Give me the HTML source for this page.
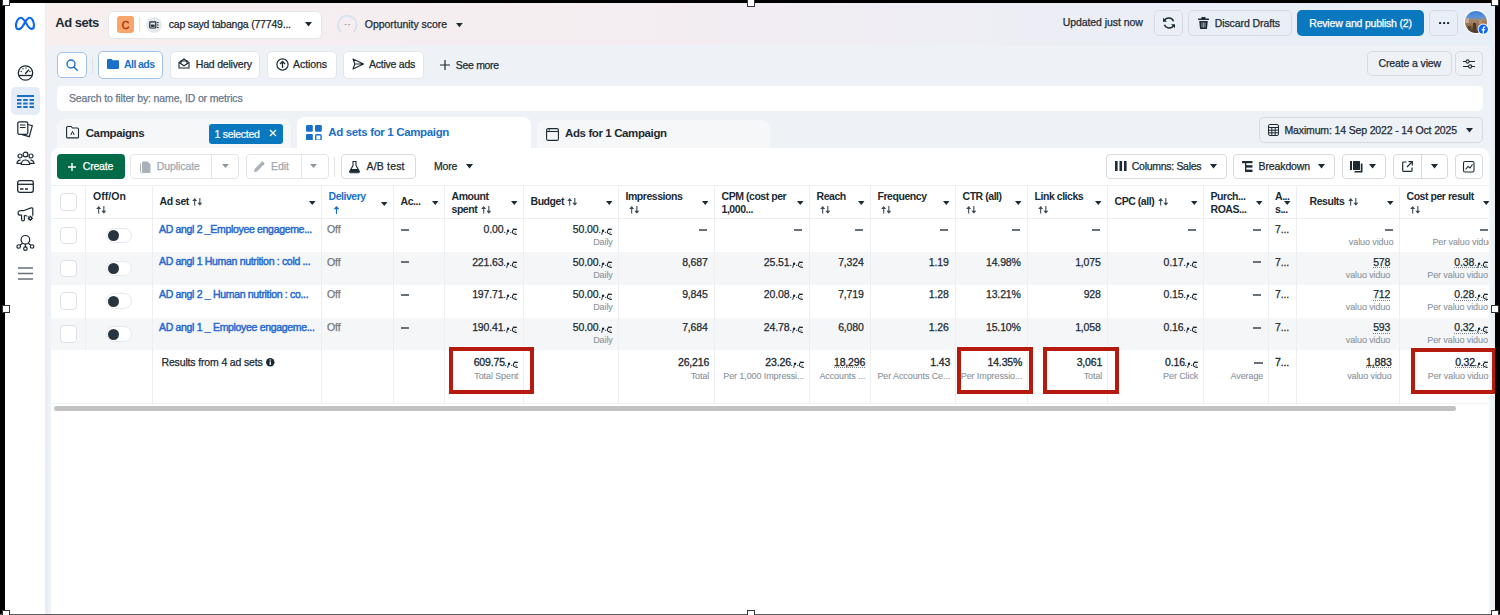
<!DOCTYPE html>
<html><head><meta charset="utf-8">
<style>
*{box-sizing:border-box;margin:0;padding:0}
html,body{width:1500px;height:615px;overflow:hidden;background:#fff}
body{position:relative;font-family:"Liberation Sans",sans-serif;font-size:10.5px;color:#1c2b33}
.a{position:absolute}
.t{position:absolute;white-space:nowrap;line-height:1;-webkit-text-stroke:0.25px currentColor}
svg{position:absolute;overflow:visible}
</style></head><body>
<div class="a" style="left:46px;top:3px;width:1449px;height:612px;background:#e6edf6"></div>
<div class="a" style="left:46px;top:3px;width:14px;height:612px;background:linear-gradient(180deg,#f4eef1 0px,#eceff5 250px,#e5ecf5 615px)"></div>
<div class="a" style="left:46px;top:3px;width:1449px;height:47px;background:linear-gradient(90deg,#f7eeee 0%,#f4edf1 40%,#ebeef6 75%,#e8eef7 100%)"></div>
<div class="a" style="left:48px;top:44.5px;width:1443.5px;height:570.5px;background:#eef1f5;border-radius:7px 7px 0 0"></div>
<div class="a" style="left:5px;top:3px;width:41px;height:612px;background:#fff;border-right:1px solid #ebedf1"></div>
<svg style="left:15px;top:15.7px" width="22" height="15" viewBox="0 0 22 15"><path d="M3.2 13.2C1.5 13.2 1 11.3 1 9.6 1 5.6 3.1 1.8 5.8 1.8c2 0 3.4 2.2 5.2 5.2 1.7 2.9 3.1 5.9 5.3 5.9 1.7 0 2.7-1.4 2.7-3.5 0-3.9-1.9-7.6-4.3-7.6-2.1 0-3.5 2.6-5.1 5.2C7.9 10.6 5.9 13.2 3.2 13.2z" fill="none" stroke="#0a66f5" stroke-width="2.1" stroke-linejoin="round"/></svg>
<div class="a" style="left:11px;top:87px;width:29px;height:28px;background:#e3ecf7;border-radius:5px"></div>
<svg style="left:17px;top:65px" width="17" height="16" viewBox="0 0 17 16"><circle cx="8.5" cy="8" r="7.2" fill="none" stroke="#1c2b33" stroke-width="1.3"/><path d="M1.8 10.5h13.4" stroke="#1c2b33" stroke-width="1.3"/><path d="M8.5 8.5l3-3.5" stroke="#1c2b33" stroke-width="1.3" stroke-linecap="round"/><circle cx="4.2" cy="6.5" r=".7" fill="#1c2b33"/><circle cx="6" cy="3.8" r=".7" fill="#1c2b33"/><circle cx="9" cy="3" r=".7" fill="#1c2b33"/><circle cx="12.8" cy="6.5" r=".7" fill="#1c2b33"/></svg>
<svg style="left:17px;top:95px" width="17" height="13" viewBox="0 0 17 13"><g fill="#1a6fc9"><rect x="0" y="0" width="17" height="2"/><rect x="0" y="4" width="4.5" height="2"/><rect x="6.2" y="4" width="4.5" height="2"/><rect x="12.5" y="4" width="4.5" height="2"/><rect x="0" y="7.5" width="4.5" height="2"/><rect x="6.2" y="7.5" width="4.5" height="2"/><rect x="12.5" y="7.5" width="4.5" height="2"/><rect x="0" y="11" width="4.5" height="2"/><rect x="6.2" y="11" width="4.5" height="2"/><rect x="12.5" y="11" width="4.5" height="2"/></g></svg>
<svg style="left:17px;top:121px" width="17" height="16" viewBox="0 0 17 16"><g fill="none" stroke="#1c2b33" stroke-width="1.2"><rect x="0.8" y="0.8" width="10" height="12.5" rx="1.5"/><path d="M10.8 3.5l4.5 1.2-3 11-7.2-2"/><path d="M3 4h5.5M3 6.5h5.5"/></g></svg>
<svg style="left:16px;top:151px" width="19" height="15" viewBox="0 0 19 15"><g fill="none" stroke="#1c2b33" stroke-width="1.2"><circle cx="9.5" cy="3.5" r="2.4"/><circle cx="4" cy="5" r="2"/><circle cx="15" cy="5" r="2"/><path d="M5.3 13.5c0-2.6 1.9-4.5 4.2-4.5s4.2 1.9 4.2 4.5z"/><path d="M4.6 9.2C2.5 9 1 10.3 1 12.3h4"/><path d="M14.4 9.2c2.1-.2 3.6 1.1 3.6 3.1h-4"/></g></svg>
<svg style="left:17px;top:180px" width="17" height="13" viewBox="0 0 17 13"><g fill="none" stroke="#1c2b33" stroke-width="1.3"><rect x="0.7" y="0.7" width="15.6" height="11.6" rx="2"/><path d="M0.7 4.3h15.6"/><path d="M3 9h3.5M8 9h3"/></g></svg>
<svg style="left:18px;top:207px" width="16" height="15" viewBox="0 0 16 15"><g fill="none" stroke="#1c2b33" stroke-width="1.2" stroke-linejoin="round"><path d="M2.3 3.7H5.2L13.2 0.9Q14.8 0.5 14.8 2V8.8"/><path d="M2.3 3.7A2.25 2.25 0 0 0 2.3 8.2H4"/><path d="M3.6 8.2V12.6A1.4 1.4 0 0 0 6.4 12.6V8.2"/><path d="M6.4 8.2L9.5 9.2"/></g><circle cx="12.3" cy="11.3" r="2.1" fill="#1c2b33"/><circle cx="12.3" cy="11.3" r="0.8" fill="#fff"/><g stroke="#1c2b33" stroke-width="1"><path d="M12.3 8.6v5.4M9.6 11.3h5.4M10.4 9.4l3.8 3.8M14.2 9.4l-3.8 3.8"/></g><circle cx="12.3" cy="11.3" r="0.7" fill="#fff"/></svg>
<svg style="left:16px;top:233px" width="19" height="19" viewBox="0 0 19 19"><g fill="none" stroke="#1c2b33" stroke-width="1.2"><circle cx="9.4" cy="6.8" r="4.3"/><path d="M9.4 11.1v3.3M6.6 10.2L3.9 12.3M12.2 10.2l2.7 2.1"/><circle cx="2.7" cy="13.5" r="1.75"/><circle cx="9.4" cy="15.7" r="1.75"/><circle cx="16.1" cy="13.5" r="1.75"/></g></svg>
<svg style="left:18px;top:267px" width="15" height="13" viewBox="0 0 15 13"><g stroke="#67707a" stroke-width="1.4"><path d="M0 1h15M0 6.5h15M0 12h15"/></g></svg>
<div class="t" style="left:55.30px;top:16.30px;font-size:13px;font-weight:bold;-webkit-text-stroke:0;color:#1c2b33;letter-spacing:-0.509px;">Ad sets</div>
<div class="a" style="left:108px;top:10.5px;width:214px;height:28.0px;background:#fff;border:1px solid #e3e6ea;border-radius:5px"></div>
<div class="a" style="left:117px;top:16px;width:17px;height:17px;background:#f8a66a;border-radius:3px"></div>
<div class="t" style="left:121.81px;top:19.51px;font-size:10.5px;color:#b0381d;letter-spacing:0.000px;-webkit-text-stroke:0.5px currentColor;">C</div>
<div class="a" style="left:139px;top:17px;width:1px;height:16px;background:#e3e6ea"></div>
<svg style="left:146px;top:16.5px" width="16" height="16" viewBox="0 0 16 16"><circle cx="8" cy="8" r="8" fill="#e6e9ed"/><rect x="3.8" y="4.8" width="6" height="6.2" rx="0.8" fill="none" stroke="#1c2b33" stroke-width="1.2"/><rect x="5" y="7.6" width="3.6" height="2.2" fill="#1c2b33"/><path d="M11 5.5h1.6M11 8h1.6M11 10.5h1.6" stroke="#1c2b33" stroke-width="1.1"/></svg>
<div class="t" style="left:168.80px;top:19.11px;font-size:10.5px;color:#1c2b33;letter-spacing:-0.202px;">cap sayd tabanga (77749...</div>
<svg style="left:304.5px;top:22.25px" width="7" height="4.5" viewBox="0 0 7 4.5"><path d="M0 0H7L3.5 4.5Z" fill="#1c2b33"/></svg>
<svg style="left:337px;top:15px" width="21" height="19" viewBox="0 0 21 19"><path d="M4 16.9A9.3 9.3 0 1 1 16.6 16.9" fill="none" stroke="#d8e4ef" stroke-width="1.9"/><path d="M7.6 9.6h2.2M11 9.6h2.2" stroke="#9aa3ab" stroke-width="0.9"/></svg>
<div class="t" style="left:364.80px;top:19.11px;font-size:10.5px;color:#1c2b33;letter-spacing:-0.040px;">Opportunity score</div>
<svg style="left:455.90000000000003px;top:22.7px" width="6.8" height="4.2" viewBox="0 0 6.8 4.2"><path d="M0 0H6.8L3.4 4.2Z" fill="#1c2b33"/></svg>
<div class="t" style="left:1062.70px;top:17.41px;font-size:10.5px;color:#1c2b33;letter-spacing:-0.071px;">Updated just now</div>
<div class="a" style="left:1154px;top:10px;width:29px;height:26px;border:1px solid #d7dbe0;border-radius:5px"></div>
<svg style="left:1161.5px;top:16px" width="14" height="14" viewBox="0 0 14 14"><g fill="none" stroke="#1c2b33" stroke-width="1.5"><path d="M11.6 5.2A5.2 5.2 0 0 0 2.3 4.6"/><path d="M2.4 8.8A5.2 5.2 0 0 0 11.7 9.4"/></g><path d="M1 1.8v4h4z" fill="#1c2b33"/><path d="M13 12.2v-4H9z" fill="#1c2b33"/></svg>
<div class="a" style="left:1188px;top:10px;width:104px;height:26px;border:1px solid #d7dbe0;border-radius:5px"></div>
<svg style="left:1197.5px;top:17px" width="11" height="12" viewBox="0 0 11 12"><g fill="#1c2b33"><rect x="0" y="1.5" width="11" height="1.6" rx=".5"/><rect x="3.5" y="0" width="4" height="2" rx=".6"/><path d="M1.2 4h8.6l-.8 7.4c-.1.5-.4.6-.8.6H2.8c-.4 0-.7-.1-.8-.6z"/></g><path d="M4 5.5v5M5.5 5.5v5M7 5.5v5" stroke="#e9eef6" stroke-width=".6"/></svg>
<div class="t" style="left:1214.70px;top:18.31px;font-size:10.5px;color:#1c2b33;letter-spacing:-0.087px;">Discard Drafts</div>
<div class="a" style="left:1297px;top:10px;width:126.5px;height:26px;background:#0a78be;border-radius:5px"></div>
<div class="t" style="left:1309.30px;top:18.31px;font-size:10.5px;color:#ffffff;letter-spacing:-0.200px;">Review and publish (2)</div>
<div class="a" style="left:1429px;top:10px;width:28.5px;height:26px;border:1px solid #d7dbe0;border-radius:5px"></div>
<svg style="left:1438.5px;top:21.8px" width="10" height="3" viewBox="0 0 10 3"><g fill="#1c2b33"><rect x="0" y="0" width="2.1" height="2.1" rx=".4"/><rect x="4" y="0" width="2.1" height="2.1" rx=".4"/><rect x="8" y="0" width="2.1" height="2.1" rx=".4"/></g></svg>
<svg style="left:1464px;top:10px" width="24" height="24" viewBox="0 0 24 24"><defs><linearGradient id="av" x1="0" y1="0" x2="0" y2="1"><stop offset="0" stop-color="#3e7fdc"/><stop offset="0.3" stop-color="#5f93d8"/><stop offset="0.4" stop-color="#a48a6a"/><stop offset="0.7" stop-color="#8a6a48"/><stop offset="1" stop-color="#3e2e20"/></linearGradient><clipPath id="avc"><circle cx="12" cy="12" r="11"/></clipPath></defs><circle cx="12" cy="12" r="12" fill="#fff"/><circle cx="12" cy="12" r="11" fill="url(#av)"/><g clip-path="url(#avc)"><rect x="1" y="8" width="4" height="5" fill="#c9a58a"/><rect x="9" y="13" width="3" height="7" fill="#4a3a2c"/><rect x="15" y="10" width="3" height="4" fill="#b89070"/><rect x="19" y="12" width="3" height="3" fill="#c86a40"/><rect x="4" y="16" width="3" height="5" fill="#5a4532"/></g><circle cx="19.2" cy="19.2" r="5.6" fill="#fff"/><circle cx="19.2" cy="19.2" r="4.7" fill="#0866ff"/><path d="M20 23.9v-3.4h1.1l.2-1.3H20v-.8c0-.4.1-.6.6-.6h.7v-1.2c-.3 0-.7-.1-1-.1-1 0-1.6.6-1.6 1.7v1h-1.1v1.3h1.1v3.4z" fill="#fff"/></svg>
<div class="a" style="left:57px;top:51.8px;width:29.5px;height:26.700000000000003px;background:#fff;border:1.5px solid #9fc3e6;border-radius:5px"></div>
<svg style="left:66px;top:59px" width="12" height="12" viewBox="0 0 12 12"><circle cx="5" cy="5" r="4" fill="none" stroke="#1a6fc9" stroke-width="1.4"/><path d="M8 8l3.2 3.2" stroke="#1a6fc9" stroke-width="1.5" stroke-linecap="round"/></svg>
<div class="a" style="left:92px;top:57px;width:1px;height:17px;background:#dde1e6"></div>
<div class="a" style="left:98.3px;top:50.5px;width:65.2px;height:28.5px;background:#fff;border:1.5px solid #9fc3e6;border-radius:5px"></div>
<svg style="left:107px;top:58.5px" width="12" height="10" viewBox="0 0 12 10"><path d="M0 1a1 1 0 0 1 1-1h3.5l1.2 1.3H11a1 1 0 0 1 1 1V9a1 1 0 0 1-1 1H1a1 1 0 0 1-1-1z" fill="#1a6fc9"/></svg>
<div class="t" style="left:124.00px;top:59.11px;font-size:10.5px;font-weight:bold;-webkit-text-stroke:0;color:#1a6fc9;letter-spacing:-0.561px;">All ads</div>
<div class="a" style="left:170px;top:51px;width:90px;height:27.5px;background:#fff;border:1px solid #e2e6eb;border-radius:5px"></div>
<svg style="left:178px;top:58px" width="12" height="11" viewBox="0 0 12 11"><g fill="none" stroke="#1c2b33" stroke-width="1.1"><path d="M1 4.5L6 1l5 3.5V10H1z"/><path d="M1 4.5l5 3.3 5-3.3"/><path d="M3 5.5V3h6v2.5"/></g></svg>
<div class="t" style="left:195.80px;top:58.71px;font-size:10.5px;color:#1c2b33;letter-spacing:-0.197px;">Had delivery</div>
<div class="a" style="left:267px;top:51px;width:69.5px;height:27.5px;background:#fff;border:1px solid #e2e6eb;border-radius:5px"></div>
<svg style="left:276px;top:57.5px" width="13" height="13" viewBox="0 0 13 13"><circle cx="6.5" cy="6.5" r="5.6" fill="none" stroke="#1c2b33" stroke-width="1.2"/><path d="M6.5 10V3.8M4 6l2.5-2.5L9 6" fill="none" stroke="#1c2b33" stroke-width="1.3"/></svg>
<div class="t" style="left:293.00px;top:58.71px;font-size:10.5px;color:#1c2b33;letter-spacing:-0.062px;">Actions</div>
<div class="a" style="left:343px;top:51px;width:81px;height:27.5px;background:#fff;border:1px solid #e2e6eb;border-radius:5px"></div>
<svg style="left:351.5px;top:58px" width="12" height="12" viewBox="0 0 12 12"><path d="M1 1l10.5 5L1 11l1.8-5z M2.8 6h8.7" fill="none" stroke="#1c2b33" stroke-width="1.1" stroke-linejoin="round"/></svg>
<div class="t" style="left:369.00px;top:58.71px;font-size:10.5px;color:#1c2b33;letter-spacing:-0.244px;">Active ads</div>
<svg style="left:440px;top:60px" width="10" height="10" viewBox="0 0 10 10"><path d="M5 0v10M0 5h10" stroke="#1c2b33" stroke-width="1.2"/></svg>
<div class="t" style="left:455.80px;top:60.11px;font-size:10.5px;color:#1c2b33;letter-spacing:-0.315px;">See more</div>
<div class="a" style="left:1367.3px;top:50.5px;width:84.70000000000005px;height:25.0px;border:1px solid #d7dbe0;border-radius:5px"></div>
<div class="t" style="left:1378.50px;top:58.31px;font-size:10.5px;color:#1c2b33;letter-spacing:-0.130px;">Create a view</div>
<div class="a" style="left:1454.5px;top:50.5px;width:28.5px;height:25.0px;border:1px solid #d7dbe0;border-radius:5px"></div>
<svg style="left:1463px;top:58.5px" width="12" height="10" viewBox="0 0 12 10"><g fill="none" stroke="#1c2b33" stroke-width="1.1"><path d="M0 2.5h3M6.2 2.5H12M0 7.5h5.5M8.7 7.5H12"/><circle cx="4.6" cy="2.5" r="1.6"/><circle cx="7.1" cy="7.5" r="1.6"/></g></svg>
<div class="a" style="left:57px;top:85.5px;width:1426px;height:25.5px;background:#fff;border-radius:5px"></div>
<div class="t" style="left:69.00px;top:92.71px;font-size:10.5px;color:#67788a;letter-spacing:-0.139px;">Search to filter by: name, ID or metrics</div>
<div class="a" style="left:57px;top:119px;width:234px;height:31px;background:#f6f7f9;border-radius:8px 8px 0 0"></div>
<svg style="left:66px;top:126px" width="13" height="12" viewBox="0 0 13 12"><path d="M0.6 1.5a1 1 0 0 1 1-1h3.6l1.3 1.5h5a1 1 0 0 1 1 1v7.9a1 1 0 0 1-1 1H1.6a1 1 0 0 1-1-1z" fill="none" stroke="#1c2b33" stroke-width="1.1"/><path d="M4.8 9l1.7-3.5L8.2 9" fill="none" stroke="#1c2b33" stroke-width="1"/></svg>
<div class="t" style="left:85.70px;top:128.07px;font-size:11.5px;font-weight:bold;-webkit-text-stroke:0;color:#1c2b33;letter-spacing:-0.376px;">Campaigns</div>
<div class="a" style="left:209px;top:123.5px;width:73.5px;height:20.0px;background:#0a78be;border-radius:3px"></div>
<div class="t" style="left:214.50px;top:128.61px;font-size:10.5px;color:#ffffff;letter-spacing:-0.287px;-webkit-text-stroke:0.2px #fff;">1 selected</div>
<svg style="left:269.5px;top:130px" width="6" height="6" viewBox="0 0 6 6"><path d="M0 0l6 6M6 0L0 6" stroke="#fff" stroke-width="1.3"/></svg>
<div class="a" style="left:297px;top:117px;width:234px;height:33px;background:#fff;border-radius:8px 8px 0 0"></div>
<svg style="left:306px;top:124.7px" width="16" height="16" viewBox="0 0 16 16"><g fill="#1a6fc9"><rect x="0" y="0" width="6.8" height="6.8" rx="1.2"/><rect x="9" y="0" width="6.8" height="6.8" rx="1.2"/><rect x="0" y="9" width="6.8" height="6.8" rx="1.2"/></g><rect x="9.7" y="9.7" width="5.4" height="5.4" rx="1" fill="none" stroke="#1a6fc9" stroke-width="1.4"/></svg>
<div class="t" style="left:328.30px;top:127.47px;font-size:11.5px;font-weight:bold;-webkit-text-stroke:0;color:#1a6fc9;letter-spacing:-0.352px;">Ad sets for 1 Campaign</div>
<div class="a" style="left:537px;top:120px;width:233px;height:30px;background:#f6f7f9;border-radius:8px 8px 0 0"></div>
<svg style="left:545.5px;top:127.5px" width="13" height="13" viewBox="0 0 13 13"><rect x="0.6" y="0.6" width="11.8" height="11.8" rx="1.5" fill="none" stroke="#1c2b33" stroke-width="1.1"/><path d="M0.6 3.5h11.8" stroke="#1c2b33" stroke-width="1.1"/><path d="M2.5 2h1.5" stroke="#1c2b33" stroke-width="1"/></svg>
<div class="t" style="left:565.00px;top:128.27px;font-size:11.5px;font-weight:bold;-webkit-text-stroke:0;color:#1c2b33;letter-spacing:-0.385px;">Ads for 1 Campaign</div>
<div class="a" style="left:1259px;top:117px;width:224px;height:26px;border:1px solid #d7dbe0;border-radius:5px"></div>
<svg style="left:1267.5px;top:124px" width="11" height="12" viewBox="0 0 11 12"><g fill="none" stroke="#1c2b33" stroke-width="1"><rect x="0.5" y="0.5" width="10" height="11" rx="1.5"/><path d="M0.5 3.5h10M0.5 6.2h10M0.5 8.8h10M3.8 3.5v8M7.2 3.5v8"/></g></svg>
<div class="t" style="left:1284.50px;top:124.51px;font-size:10.5px;color:#1c2b33;letter-spacing:-0.148px;">Maximum: 14 Sep 2022 - 14 Oct 2025</div>
<svg style="left:1465.5px;top:127.55000000000001px" width="7" height="4.5" viewBox="0 0 7 4.5"><path d="M0 0H7L3.5 4.5Z" fill="#1c2b33"/></svg>
<div class="a" style="left:51px;top:148px;width:1438px;height:467px;background:#fff;border-radius:8px 8px 0 0"></div>
<div class="a" style="left:297px;top:140px;width:234px;height:10px;background:#fff"></div>
<div class="a" style="left:57px;top:154px;width:67.7px;height:24.69999999999999px;background:#036b48;border-radius:4px"></div>
<svg style="left:67.5px;top:162.5px" width="8" height="8" viewBox="0 0 8 8"><path d="M4 0v8M0 4h8" stroke="#fff" stroke-width="1.4"/></svg>
<div class="t" style="left:82.80px;top:161.11px;font-size:10.5px;color:#ffffff;letter-spacing:-0.203px;-webkit-text-stroke:0.25px #fff;">Create</div>
<div class="a" style="left:130.4px;top:154px;width:108.6px;height:24.69999999999999px;border:1px solid #e2e6eb;border-radius:4px"></div>
<div class="a" style="left:211px;top:154.5px;width:1px;height:23.69999999999999px;background:#e2e6eb"></div>
<svg style="left:139px;top:161px" width="12" height="12" viewBox="0 0 12 12"><path d="M4 0.5h4.5l3 3v7.5a1 1 0 0 1-1 1H4a1 1 0 0 1-1-1V1.5a1 1 0 0 1 1-1z" fill="#a9b1b9"/><path d="M1.5 2.5v8.2a1.8 1.8 0 0 0 1 1.5" fill="none" stroke="#a9b1b9" stroke-width="1"/></svg>
<div class="t" style="left:156.80px;top:161.11px;font-size:10.5px;color:#a0a8b0;letter-spacing:-0.086px;">Duplicate</div>
<svg style="left:221.8px;top:164.3px" width="7" height="4" viewBox="0 0 7 4"><path d="M0 0H7L3.5 4Z" fill="#8e98a2"/></svg>
<div class="a" style="left:245.5px;top:154px;width:83.19999999999999px;height:24.69999999999999px;border:1px solid #e2e6eb;border-radius:4px"></div>
<div class="a" style="left:300.5px;top:154.5px;width:1.0px;height:23.69999999999999px;background:#e2e6eb"></div>
<svg style="left:254px;top:161px" width="11" height="11" viewBox="0 0 11 11"><path d="M0 11l.6-3L7.8.8a1 1 0 0 1 1.4 0l1 1a1 1 0 0 1 0 1.4L3 10.4z" fill="#a9b1b9"/></svg>
<div class="t" style="left:271.00px;top:161.11px;font-size:10.5px;color:#a0a8b0;letter-spacing:-0.023px;">Edit</div>
<svg style="left:310.3px;top:164.3px" width="7" height="4" viewBox="0 0 7 4"><path d="M0 0H7L3.5 4Z" fill="#8e98a2"/></svg>
<div class="a" style="left:334px;top:156.5px;width:1px;height:20.0px;background:#e2e6eb"></div>
<div class="a" style="left:340.7px;top:154px;width:75.30000000000001px;height:24.69999999999999px;border:1px solid #d7dbe0;border-radius:4px"></div>
<svg style="left:349px;top:160.5px" width="11" height="12" viewBox="0 0 11 12"><path d="M3.5 0.5h4M4 0.5v4L0.7 10.3a1 1 0 0 0 .9 1.4h7.8a1 1 0 0 0 .9-1.4L7 4.5v-4" fill="none" stroke="#1c2b33" stroke-width="1.1"/><path d="M2 8h7l1 2.5-.5 1H1.5l-.5-1z" fill="#1c2b33"/></svg>
<div class="t" style="left:366.50px;top:161.11px;font-size:10.5px;color:#1c2b33;letter-spacing:0.179px;">A/B test</div>
<div class="t" style="left:434.00px;top:161.11px;font-size:10.5px;color:#1c2b33;letter-spacing:-0.156px;">More</div>
<svg style="left:465.5px;top:163.75px" width="7" height="4.5" viewBox="0 0 7 4.5"><path d="M0 0H7L3.5 4.5Z" fill="#1c2b33"/></svg>
<div class="a" style="left:1106.4px;top:154px;width:120.19999999999982px;height:24.5px;border:1px solid #d7dbe0;border-radius:4px"></div>
<svg style="left:1114.6px;top:161.2px" width="11.7" height="10" viewBox="0 0 11.7 10"><g fill="#1c2b33"><rect x="0" y="0" width="2.6" height="10"/><rect x="4.5" y="0" width="2.6" height="10"/><rect x="9" y="0" width="2.6" height="10"/></g></svg>
<div class="t" style="left:1131.80px;top:161.11px;font-size:10.5px;color:#1c2b33;letter-spacing:-0.295px;">Columns: Sales</div>
<svg style="left:1209.5px;top:164.05px" width="7" height="4.5" viewBox="0 0 7 4.5"><path d="M0 0H7L3.5 4.5Z" fill="#1c2b33"/></svg>
<div class="a" style="left:1232.6px;top:154px;width:102.80000000000018px;height:24.5px;border:1px solid #d7dbe0;border-radius:4px"></div>
<svg style="left:1241.6px;top:161px" width="10.5" height="11" viewBox="0 0 10.5 11"><g fill="#1c2b33"><rect x="0" y="0" width="10.5" height="2.2"/><rect x="3" y="4.2" width="7.5" height="2.4"/><rect x="3" y="8.6" width="7.5" height="2.4"/><rect x="3" y="0" width="1.3" height="11"/></g></svg>
<div class="t" style="left:1258.60px;top:161.11px;font-size:10.5px;color:#1c2b33;letter-spacing:-0.126px;">Breakdown</div>
<svg style="left:1318.0px;top:164.05px" width="7" height="4.5" viewBox="0 0 7 4.5"><path d="M0 0H7L3.5 4.5Z" fill="#1c2b33"/></svg>
<div class="a" style="left:1342px;top:154px;width:44.40000000000009px;height:24.5px;border:1px solid #d7dbe0;border-radius:4px"></div>
<svg style="left:1349.6px;top:160.5px" width="12.5" height="12" viewBox="0 0 12.5 12"><g fill="#1c2b33"><rect x="0" y="0" width="2" height="9"/><rect x="3" y="0" width="7" height="9" rx=".5"/><path d="M10.8 2.5h1.7v9H4.5v-1.6h6.3z"/></g></svg>
<svg style="left:1369.0px;top:164.05px" width="7" height="4.5" viewBox="0 0 7 4.5"><path d="M0 0H7L3.5 4.5Z" fill="#1c2b33"/></svg>
<div class="a" style="left:1393.3px;top:154px;width:55.200000000000045px;height:24.5px;border:1px solid #d7dbe0;border-radius:4px"></div>
<div class="a" style="left:1420.5px;top:154.5px;width:1.0px;height:23.5px;background:#d7dbe0"></div>
<svg style="left:1401.5px;top:161px" width="11" height="11" viewBox="0 0 11 11"><g fill="none" stroke="#1c2b33" stroke-width="1.2"><path d="M4.5 1H1.5a.8.8 0 0 0-.8.8v7.7a.8.8 0 0 0 .8.8h7.7a.8.8 0 0 0 .8-.8V6.5"/><path d="M6.5 0.7h3.8v3.8M10.3 0.7L5 6"/></g></svg>
<svg style="left:1431.0px;top:164.05px" width="7" height="4.5" viewBox="0 0 7 4.5"><path d="M0 0H7L3.5 4.5Z" fill="#1c2b33"/></svg>
<div class="a" style="left:1454.8px;top:154px;width:27.799999999999955px;height:24.5px;border:1px solid #d7dbe0;border-radius:4px"></div>
<svg style="left:1463px;top:161px" width="11.5" height="11.5" viewBox="0 0 11.5 11.5"><g fill="none" stroke="#1c2b33" stroke-width="1.1"><rect x="0.5" y="0.5" width="10.5" height="10.5" rx="1.5"/><path d="M2.5 8.5l2.5-3 2 1.5 2.5-3.5"/></g></svg>
<svg width="0" height="0" style="position:absolute"><defs><symbol id="egp" viewBox="0 0 13 7"><g fill="currentColor"><circle cx="0.7" cy="4.3" r="0.65"/><circle cx="4.1" cy="2.7" r="1.2"/><circle cx="6.7" cy="4.3" r="0.65"/><path d="M8.7 0.5L12.9 0.8V2L9.4 1.9z"/><circle cx="11.1" cy="4.1" r="0.55"/></g><g fill="none" stroke="currentColor" stroke-linecap="round"><path d="M3.5 3.3L2.8 6.5" stroke-width="0.95"/><path d="M9.7 1.5C8.3 2.3 7.9 4.4 9.1 5.4c.9.8 2.3 1 3.5.9" stroke-width="1.1"/></g></symbol><symbol id="sort" viewBox="0 0 11 8"><g fill="none" stroke="currentColor" stroke-width="1.15"><path d="M2.8 8V1.2"/><path d="M8.2 0v6.8"/></g><path d="M0.2 3L2.8 0 5.4 3z" fill="currentColor"/><path d="M5.6 5L8.2 8l2.6-3z" fill="currentColor"/></symbol></defs></svg>
<div class="a" style="left:51px;top:252px;width:1438px;height:32.5px;background:#f5f6f8"></div>
<div class="a" style="left:51px;top:317.5px;width:1438px;height:32.5px;background:#f5f6f8"></div>
<div class="a" style="left:51px;top:185px;width:1438px;height:1px;background:#eceef1"></div>
<div class="a" style="left:51px;top:218px;width:1438px;height:1px;background:#eceef1"></div>
<div class="a" style="left:51px;top:403px;width:1438px;height:1px;background:#f1f2f4"></div>
<div class="a" style="left:85px;top:185px;width:1px;height:165px;background:#eceef1"></div>
<div class="a" style="left:152px;top:185px;width:1px;height:219px;background:#eceef1"></div>
<div class="a" style="left:321px;top:185px;width:1px;height:219px;background:#eceef1"></div>
<div class="a" style="left:393px;top:185px;width:1px;height:219px;background:#eceef1"></div>
<div class="a" style="left:444px;top:185px;width:1px;height:219px;background:#eceef1"></div>
<div class="a" style="left:523px;top:185px;width:1px;height:219px;background:#eceef1"></div>
<div class="a" style="left:618px;top:185px;width:1px;height:219px;background:#eceef1"></div>
<div class="a" style="left:714px;top:185px;width:1px;height:219px;background:#eceef1"></div>
<div class="a" style="left:809px;top:185px;width:1px;height:219px;background:#eceef1"></div>
<div class="a" style="left:870px;top:185px;width:1px;height:219px;background:#eceef1"></div>
<div class="a" style="left:955px;top:185px;width:1px;height:219px;background:#eceef1"></div>
<div class="a" style="left:1027px;top:185px;width:1px;height:219px;background:#eceef1"></div>
<div class="a" style="left:1107px;top:185px;width:1px;height:219px;background:#eceef1"></div>
<div class="a" style="left:1203px;top:185px;width:1px;height:219px;background:#eceef1"></div>
<div class="a" style="left:1268px;top:185px;width:1px;height:219px;background:#eceef1"></div>
<div class="a" style="left:1296px;top:185px;width:1px;height:219px;background:#eceef1"></div>
<div class="a" style="left:1399px;top:185px;width:1px;height:219px;background:#eceef1"></div>
<div class="a" style="left:59.5px;top:193.2px;width:17.5px;height:17.5px;background:#fff;border:1px solid #dde1e6;border-radius:4px"></div>
<div class="a" style="left:59.5px;top:226.8px;width:17.5px;height:17.5px;background:#fff;border:1px solid #dde1e6;border-radius:4px"></div>
<div class="a" style="left:105.6px;top:227.79999999999998px;width:26.80000000000001px;height:15.600000000000023px;background:#fff;border:1px solid #e6e9ed;border-radius:8px"></div>
<div class="a" style="left:107.8px;top:230.0px;width:11.200000000000003px;height:11.199999999999989px;background:#283540;border-radius:50%"></div>
<div class="a" style="left:59.5px;top:259.8px;width:17.5px;height:17.5px;background:#fff;border:1px solid #dde1e6;border-radius:4px"></div>
<div class="a" style="left:105.6px;top:260.8px;width:26.80000000000001px;height:15.600000000000023px;background:#fff;border:1px solid #e6e9ed;border-radius:8px"></div>
<div class="a" style="left:107.8px;top:263.0px;width:11.200000000000003px;height:11.200000000000045px;background:#283540;border-radius:50%"></div>
<div class="a" style="left:59.5px;top:292.3px;width:17.5px;height:17.5px;background:#fff;border:1px solid #dde1e6;border-radius:4px"></div>
<div class="a" style="left:105.6px;top:293.3px;width:26.80000000000001px;height:15.600000000000023px;background:#fff;border:1px solid #e6e9ed;border-radius:8px"></div>
<div class="a" style="left:107.8px;top:295.5px;width:11.200000000000003px;height:11.200000000000045px;background:#283540;border-radius:50%"></div>
<div class="a" style="left:59.5px;top:325.3px;width:17.5px;height:17.5px;background:#fff;border:1px solid #dde1e6;border-radius:4px"></div>
<div class="a" style="left:105.6px;top:326.3px;width:26.80000000000001px;height:15.600000000000023px;background:#fff;border:1px solid #e6e9ed;border-radius:8px"></div>
<div class="a" style="left:107.8px;top:328.5px;width:11.200000000000003px;height:11.200000000000045px;background:#283540;border-radius:50%"></div>
<div class="t" style="left:93.00px;top:191.11px;font-size:10.5px;font-weight:bold;-webkit-text-stroke:0;color:#1c2b33;letter-spacing:0.057px;">Off/On</div>
<svg style="left:96.00px;top:205.80px;color:#3e4a55" width="10.5" height="7.8" viewBox="0 0 11 8"><use href="#sort"/></svg>
<div class="t" style="left:159.50px;top:196.11px;font-size:10.5px;font-weight:bold;-webkit-text-stroke:0;color:#1c2b33;letter-spacing:-0.450px;">Ad set</div>
<svg style="left:192.39px;top:197.80px;color:#3e4a55" width="10.5" height="7.8" viewBox="0 0 11 8"><use href="#sort"/></svg>
<svg style="left:309.25px;top:201.0px" width="6.5" height="4" viewBox="0 0 6.5 4"><path d="M0 0H6.5L3.25 4Z" fill="#1c2b33"/></svg>
<div class="t" style="left:328.50px;top:191.11px;font-size:10.5px;font-weight:bold;-webkit-text-stroke:0;color:#1a6fc9;letter-spacing:-0.450px;">Delivery</div>
<svg style="left:332.5px;top:206px" width="7" height="8" viewBox="0 0 7 8"><path d="M3.5 8V1.5" stroke="#1a6fc9" stroke-width="1.2"/><path d="M0.5 3.3L3.5 0 6.5 3.3z" fill="#1a6fc9"/></svg>
<svg style="left:381.25px;top:202.0px" width="6.5" height="4" viewBox="0 0 6.5 4"><path d="M0 0H6.5L3.25 4Z" fill="#1c2b33"/></svg>
<div class="t" style="left:400.50px;top:196.11px;font-size:10.5px;font-weight:bold;-webkit-text-stroke:0;color:#1c2b33;letter-spacing:-0.450px;">Ac...</div>
<svg style="left:432.25px;top:201.0px" width="6.5" height="4" viewBox="0 0 6.5 4"><path d="M0 0H6.5L3.25 4Z" fill="#1c2b33"/></svg>
<div class="t" style="left:451.50px;top:191.11px;font-size:10.5px;font-weight:bold;-webkit-text-stroke:0;color:#1c2b33;letter-spacing:-0.450px;">Amount</div>
<div class="t" style="left:451.50px;top:204.11px;font-size:10.5px;font-weight:bold;-webkit-text-stroke:0;color:#1c2b33;letter-spacing:-0.450px;">spent</div>
<svg style="left:480.75px;top:205.80px;color:#3e4a55" width="10.5" height="7.8" viewBox="0 0 11 8"><use href="#sort"/></svg>
<svg style="left:511.25px;top:201.0px" width="6.5" height="4" viewBox="0 0 6.5 4"><path d="M0 0H6.5L3.25 4Z" fill="#1c2b33"/></svg>
<div class="t" style="left:530.50px;top:196.11px;font-size:10.5px;font-weight:bold;-webkit-text-stroke:0;color:#1c2b33;letter-spacing:-0.450px;">Budget</div>
<svg style="left:567.46px;top:197.80px;color:#3e4a55" width="10.5" height="7.8" viewBox="0 0 11 8"><use href="#sort"/></svg>
<svg style="left:606.25px;top:201.0px" width="6.5" height="4" viewBox="0 0 6.5 4"><path d="M0 0H6.5L3.25 4Z" fill="#1c2b33"/></svg>
<div class="t" style="left:625.50px;top:191.11px;font-size:10.5px;font-weight:bold;-webkit-text-stroke:0;color:#1c2b33;letter-spacing:-0.450px;">Impressions</div>
<svg style="left:628.50px;top:205.80px;color:#3e4a55" width="10.5" height="7.8" viewBox="0 0 11 8"><use href="#sort"/></svg>
<svg style="left:702.25px;top:201.0px" width="6.5" height="4" viewBox="0 0 6.5 4"><path d="M0 0H6.5L3.25 4Z" fill="#1c2b33"/></svg>
<div class="t" style="left:721.50px;top:191.11px;font-size:10.5px;font-weight:bold;-webkit-text-stroke:0;color:#1c2b33;letter-spacing:-0.450px;">CPM (cost per</div>
<div class="t" style="left:721.50px;top:204.11px;font-size:10.5px;font-weight:bold;-webkit-text-stroke:0;color:#1c2b33;letter-spacing:-0.450px;">1,000...</div>
<svg style="left:797.25px;top:201.0px" width="6.5" height="4" viewBox="0 0 6.5 4"><path d="M0 0H6.5L3.25 4Z" fill="#1c2b33"/></svg>
<div class="t" style="left:816.50px;top:191.11px;font-size:10.5px;font-weight:bold;-webkit-text-stroke:0;color:#1c2b33;letter-spacing:-0.450px;">Reach</div>
<svg style="left:819.50px;top:205.80px;color:#3e4a55" width="10.5" height="7.8" viewBox="0 0 11 8"><use href="#sort"/></svg>
<svg style="left:858.25px;top:201.0px" width="6.5" height="4" viewBox="0 0 6.5 4"><path d="M0 0H6.5L3.25 4Z" fill="#1c2b33"/></svg>
<div class="t" style="left:877.50px;top:191.11px;font-size:10.5px;font-weight:bold;-webkit-text-stroke:0;color:#1c2b33;letter-spacing:-0.450px;">Frequency</div>
<svg style="left:880.50px;top:205.80px;color:#3e4a55" width="10.5" height="7.8" viewBox="0 0 11 8"><use href="#sort"/></svg>
<svg style="left:943.25px;top:201.0px" width="6.5" height="4" viewBox="0 0 6.5 4"><path d="M0 0H6.5L3.25 4Z" fill="#1c2b33"/></svg>
<div class="t" style="left:962.50px;top:191.11px;font-size:10.5px;font-weight:bold;-webkit-text-stroke:0;color:#1c2b33;letter-spacing:-0.450px;">CTR (all)</div>
<svg style="left:965.50px;top:205.80px;color:#3e4a55" width="10.5" height="7.8" viewBox="0 0 11 8"><use href="#sort"/></svg>
<svg style="left:1015.25px;top:201.0px" width="6.5" height="4" viewBox="0 0 6.5 4"><path d="M0 0H6.5L3.25 4Z" fill="#1c2b33"/></svg>
<div class="t" style="left:1034.50px;top:191.11px;font-size:10.5px;font-weight:bold;-webkit-text-stroke:0;color:#1c2b33;letter-spacing:-0.450px;">Link clicks</div>
<svg style="left:1037.50px;top:205.80px;color:#3e4a55" width="10.5" height="7.8" viewBox="0 0 11 8"><use href="#sort"/></svg>
<svg style="left:1095.25px;top:201.0px" width="6.5" height="4" viewBox="0 0 6.5 4"><path d="M0 0H6.5L3.25 4Z" fill="#1c2b33"/></svg>
<div class="t" style="left:1114.50px;top:196.11px;font-size:10.5px;font-weight:bold;-webkit-text-stroke:0;color:#1c2b33;letter-spacing:-0.450px;">CPC (all)</div>
<svg style="left:1157.70px;top:197.80px;color:#3e4a55" width="10.5" height="7.8" viewBox="0 0 11 8"><use href="#sort"/></svg>
<svg style="left:1191.25px;top:201.0px" width="6.5" height="4" viewBox="0 0 6.5 4"><path d="M0 0H6.5L3.25 4Z" fill="#1c2b33"/></svg>
<div class="t" style="left:1210.50px;top:191.11px;font-size:10.5px;font-weight:bold;-webkit-text-stroke:0;color:#1c2b33;letter-spacing:-0.450px;">Purch...</div>
<div class="t" style="left:1210.50px;top:204.11px;font-size:10.5px;font-weight:bold;-webkit-text-stroke:0;color:#1c2b33;letter-spacing:-0.450px;">ROAS...</div>
<svg style="left:1256.25px;top:201.0px" width="6.5" height="4" viewBox="0 0 6.5 4"><path d="M0 0H6.5L3.25 4Z" fill="#1c2b33"/></svg>
<div class="t" style="left:1275.00px;top:191.11px;font-size:10.5px;font-weight:bold;-webkit-text-stroke:0;color:#1c2b33;letter-spacing:-0.450px;">A...</div>
<div class="t" style="left:1275.00px;top:204.11px;font-size:10.5px;font-weight:bold;-webkit-text-stroke:0;color:#1c2b33;letter-spacing:-0.450px;">s...</div>
<svg style="left:1284.25px;top:201.0px" width="6.5" height="4" viewBox="0 0 6.5 4"><path d="M0 0H6.5L3.25 4Z" fill="#1c2b33"/></svg>
<div class="t" style="left:1309.50px;top:196.11px;font-size:10.5px;font-weight:bold;-webkit-text-stroke:0;color:#1c2b33;letter-spacing:-0.450px;">Results</div>
<svg style="left:1347.78px;top:197.80px;color:#3e4a55" width="10.5" height="7.8" viewBox="0 0 11 8"><use href="#sort"/></svg>
<svg style="left:1387.25px;top:201.0px" width="6.5" height="4" viewBox="0 0 6.5 4"><path d="M0 0H6.5L3.25 4Z" fill="#1c2b33"/></svg>
<div class="t" style="left:1406.50px;top:191.11px;font-size:10.5px;font-weight:bold;-webkit-text-stroke:0;color:#1c2b33;letter-spacing:-0.450px;">Cost per result</div>
<svg style="left:1409.50px;top:205.80px;color:#3e4a55" width="10.5" height="7.8" viewBox="0 0 11 8"><use href="#sort"/></svg>
<svg style="left:1482.75px;top:201.0px" width="6.5" height="4" viewBox="0 0 6.5 4"><path d="M0 0H6.5L3.25 4Z" fill="#1c2b33"/></svg>
<div class="t" style="left:159.00px;top:223.61px;font-size:10.5px;color:#2569cf;letter-spacing:-0.320px;-webkit-text-stroke:0.45px currentColor;">AD angl 2 _Employee engageme...</div>
<div class="t" style="left:327.00px;top:224.01px;font-size:10.5px;color:#72777c;letter-spacing:-0.100px;-webkit-text-stroke:0.25px currentColor;">Off</div>
<div class="a" style="left:400.5px;top:229px;width:8.5px;height:1.5px;background:#68717a"></div>
<svg style="left:503.70px;top:228.00px;color:#1c2b33" width="13" height="7"><use href="#egp"/></svg>
<div class="t" style="left:483.56px;top:224.01px;font-size:10.5px;color:#1c2b33;letter-spacing:-0.150px;-webkit-text-stroke:0.25px currentColor;">0.00</div>
<svg style="left:598.70px;top:228.00px;color:#1c2b33" width="13" height="7"><use href="#egp"/></svg>
<div class="t" style="left:572.87px;top:224.01px;font-size:10.5px;color:#1c2b33;letter-spacing:-0.150px;-webkit-text-stroke:0.25px currentColor;">50.00</div>
<div class="a" style="left:698.9000000000001px;top:229px;width:8.5px;height:1.5px;background:#68717a"></div>
<div class="a" style="left:793.9000000000001px;top:229px;width:8.5px;height:1.5px;background:#68717a"></div>
<div class="a" style="left:854.9000000000001px;top:229px;width:8.5px;height:1.5px;background:#68717a"></div>
<div class="a" style="left:939.9000000000001px;top:229px;width:8.5px;height:1.5px;background:#68717a"></div>
<div class="a" style="left:1011.9000000000001px;top:229px;width:8.5px;height:1.5px;background:#68717a"></div>
<div class="a" style="left:1091.9px;top:229px;width:8.5px;height:1.5px;background:#68717a"></div>
<div class="a" style="left:1187.9px;top:229px;width:8.5px;height:1.5px;background:#68717a"></div>
<div class="a" style="left:1252.9px;top:229px;width:8.5px;height:1.5px;background:#68717a"></div>
<div class="t" style="left:593.20px;top:238.38px;font-size:9px;color:#8a939b;letter-spacing:-0.100px;-webkit-text-stroke:0.1px currentColor;">Daily</div>
<div class="t" style="left:1275.00px;top:224.01px;font-size:10.5px;color:#1c2b33;letter-spacing:-0.100px;-webkit-text-stroke:0.25px currentColor;">7...</div>
<div class="a" style="left:1384.5px;top:229px;width:8.5px;height:1.5px;background:#68717a"></div>
<div class="t" style="left:1348.87px;top:238.38px;font-size:9px;color:#8a939b;letter-spacing:-0.100px;-webkit-text-stroke:0.1px currentColor;">valuo viduo</div>
<div class="a" style="left:1479.5px;top:229px;width:8.5px;height:1.5px;background:#68717a"></div>
<div class="t" style="left:1432.46px;top:238.38px;font-size:9px;color:#8a939b;letter-spacing:-0.100px;-webkit-text-stroke:0.1px currentColor;">Per valuo viduo</div>
<div class="t" style="left:159.00px;top:256.11px;font-size:10.5px;color:#2569cf;letter-spacing:-0.320px;-webkit-text-stroke:0.45px currentColor;">AD angl 1 Human nutrition : cold ...</div>
<div class="t" style="left:327.00px;top:256.51px;font-size:10.5px;color:#72777c;letter-spacing:-0.100px;-webkit-text-stroke:0.25px currentColor;">Off</div>
<div class="a" style="left:400.5px;top:261px;width:8.5px;height:1.5px;background:#68717a"></div>
<svg style="left:503.70px;top:260.50px;color:#1c2b33" width="13" height="7"><use href="#egp"/></svg>
<div class="t" style="left:472.18px;top:256.51px;font-size:10.5px;color:#1c2b33;letter-spacing:-0.150px;-webkit-text-stroke:0.25px currentColor;">221.63</div>
<svg style="left:598.70px;top:260.50px;color:#1c2b33" width="13" height="7"><use href="#egp"/></svg>
<div class="t" style="left:572.87px;top:256.51px;font-size:10.5px;color:#1c2b33;letter-spacing:-0.150px;-webkit-text-stroke:0.25px currentColor;">50.00</div>
<div class="t" style="left:682.17px;top:256.51px;font-size:10.5px;color:#1c2b33;letter-spacing:-0.150px;-webkit-text-stroke:0.25px currentColor;">8,687</div>
<svg style="left:789.70px;top:260.50px;color:#1c2b33" width="13" height="7"><use href="#egp"/></svg>
<div class="t" style="left:763.87px;top:256.51px;font-size:10.5px;color:#1c2b33;letter-spacing:-0.150px;-webkit-text-stroke:0.25px currentColor;">25.51</div>
<div class="t" style="left:838.17px;top:256.51px;font-size:10.5px;color:#1c2b33;letter-spacing:-0.150px;-webkit-text-stroke:0.25px currentColor;">7,324</div>
<div class="t" style="left:928.86px;top:256.51px;font-size:10.5px;color:#1c2b33;letter-spacing:-0.150px;-webkit-text-stroke:0.25px currentColor;">1.19</div>
<div class="t" style="left:985.99px;top:256.51px;font-size:10.5px;color:#1c2b33;letter-spacing:-0.150px;-webkit-text-stroke:0.25px currentColor;">14.98%</div>
<div class="t" style="left:1075.17px;top:256.51px;font-size:10.5px;color:#1c2b33;letter-spacing:-0.150px;-webkit-text-stroke:0.25px currentColor;">1,075</div>
<svg style="left:1183.70px;top:260.50px;color:#1c2b33" width="13" height="7"><use href="#egp"/></svg>
<div class="t" style="left:1163.56px;top:256.51px;font-size:10.5px;color:#1c2b33;letter-spacing:-0.150px;-webkit-text-stroke:0.25px currentColor;">0.17</div>
<div class="a" style="left:1252.9px;top:261px;width:8.5px;height:1.5px;background:#68717a"></div>
<div class="t" style="left:593.20px;top:270.88px;font-size:9px;color:#8a939b;letter-spacing:-0.100px;-webkit-text-stroke:0.1px currentColor;">Daily</div>
<div class="t" style="left:1275.00px;top:256.51px;font-size:10.5px;color:#1c2b33;letter-spacing:-0.100px;-webkit-text-stroke:0.25px currentColor;">7...</div>
<div class="t" style="left:1373.13px;top:256.51px;font-size:10.5px;color:#1c2b33;letter-spacing:-0.150px;-webkit-text-stroke:0.25px currentColor;">578</div>
<div class="a" style="left:1373.13px;top:267.00px;width:17.07px;height:1px;background:repeating-linear-gradient(90deg,#7a848d 0 1px,transparent 1px 2px)"></div>
<div class="t" style="left:1345.77px;top:270.88px;font-size:9px;color:#8a939b;letter-spacing:-0.100px;-webkit-text-stroke:0.1px currentColor;">valuo viduo</div>
<svg style="left:1474.50px;top:260.50px;color:#1c2b33" width="13" height="7"><use href="#egp"/></svg>
<div class="t" style="left:1454.36px;top:256.51px;font-size:10.5px;color:#1c2b33;letter-spacing:-0.150px;-webkit-text-stroke:0.25px currentColor;">0.38</div>
<div class="a" style="left:1454.36px;top:267.00px;width:33.14px;height:1px;background:repeating-linear-gradient(90deg,#7a848d 0 1px,transparent 1px 2px)"></div>
<div class="t" style="left:1427.26px;top:270.88px;font-size:9px;color:#8a939b;letter-spacing:-0.100px;-webkit-text-stroke:0.1px currentColor;">Per valuo viduo</div>
<div class="t" style="left:159.00px;top:288.61px;font-size:10.5px;color:#2569cf;letter-spacing:-0.320px;-webkit-text-stroke:0.45px currentColor;">AD angl 2 _ Human nutrition : co...</div>
<div class="t" style="left:327.00px;top:289.01px;font-size:10.5px;color:#72777c;letter-spacing:-0.100px;-webkit-text-stroke:0.25px currentColor;">Off</div>
<div class="a" style="left:400.5px;top:294px;width:8.5px;height:1.5px;background:#68717a"></div>
<svg style="left:503.70px;top:293.00px;color:#1c2b33" width="13" height="7"><use href="#egp"/></svg>
<div class="t" style="left:472.18px;top:289.01px;font-size:10.5px;color:#1c2b33;letter-spacing:-0.150px;-webkit-text-stroke:0.25px currentColor;">197.71</div>
<svg style="left:598.70px;top:293.00px;color:#1c2b33" width="13" height="7"><use href="#egp"/></svg>
<div class="t" style="left:572.87px;top:289.01px;font-size:10.5px;color:#1c2b33;letter-spacing:-0.150px;-webkit-text-stroke:0.25px currentColor;">50.00</div>
<div class="t" style="left:682.17px;top:289.01px;font-size:10.5px;color:#1c2b33;letter-spacing:-0.150px;-webkit-text-stroke:0.25px currentColor;">9,845</div>
<svg style="left:789.70px;top:293.00px;color:#1c2b33" width="13" height="7"><use href="#egp"/></svg>
<div class="t" style="left:763.87px;top:289.01px;font-size:10.5px;color:#1c2b33;letter-spacing:-0.150px;-webkit-text-stroke:0.25px currentColor;">20.08</div>
<div class="t" style="left:838.17px;top:289.01px;font-size:10.5px;color:#1c2b33;letter-spacing:-0.150px;-webkit-text-stroke:0.25px currentColor;">7,719</div>
<div class="t" style="left:928.86px;top:289.01px;font-size:10.5px;color:#1c2b33;letter-spacing:-0.150px;-webkit-text-stroke:0.25px currentColor;">1.28</div>
<div class="t" style="left:985.99px;top:289.01px;font-size:10.5px;color:#1c2b33;letter-spacing:-0.150px;-webkit-text-stroke:0.25px currentColor;">13.21%</div>
<div class="t" style="left:1083.63px;top:289.01px;font-size:10.5px;color:#1c2b33;letter-spacing:-0.150px;-webkit-text-stroke:0.25px currentColor;">928</div>
<svg style="left:1183.70px;top:293.00px;color:#1c2b33" width="13" height="7"><use href="#egp"/></svg>
<div class="t" style="left:1163.56px;top:289.01px;font-size:10.5px;color:#1c2b33;letter-spacing:-0.150px;-webkit-text-stroke:0.25px currentColor;">0.15</div>
<div class="a" style="left:1252.9px;top:294px;width:8.5px;height:1.5px;background:#68717a"></div>
<div class="t" style="left:593.20px;top:303.38px;font-size:9px;color:#8a939b;letter-spacing:-0.100px;-webkit-text-stroke:0.1px currentColor;">Daily</div>
<div class="t" style="left:1275.00px;top:289.01px;font-size:10.5px;color:#1c2b33;letter-spacing:-0.100px;-webkit-text-stroke:0.25px currentColor;">7...</div>
<div class="t" style="left:1373.13px;top:289.01px;font-size:10.5px;color:#1c2b33;letter-spacing:-0.150px;-webkit-text-stroke:0.25px currentColor;">712</div>
<div class="a" style="left:1373.13px;top:299.50px;width:17.07px;height:1px;background:repeating-linear-gradient(90deg,#7a848d 0 1px,transparent 1px 2px)"></div>
<div class="t" style="left:1345.77px;top:303.38px;font-size:9px;color:#8a939b;letter-spacing:-0.100px;-webkit-text-stroke:0.1px currentColor;">valuo viduo</div>
<svg style="left:1474.50px;top:293.00px;color:#1c2b33" width="13" height="7"><use href="#egp"/></svg>
<div class="t" style="left:1454.36px;top:289.01px;font-size:10.5px;color:#1c2b33;letter-spacing:-0.150px;-webkit-text-stroke:0.25px currentColor;">0.28</div>
<div class="a" style="left:1454.36px;top:299.50px;width:33.14px;height:1px;background:repeating-linear-gradient(90deg,#7a848d 0 1px,transparent 1px 2px)"></div>
<div class="t" style="left:1427.26px;top:303.38px;font-size:9px;color:#8a939b;letter-spacing:-0.100px;-webkit-text-stroke:0.1px currentColor;">Per valuo viduo</div>
<div class="t" style="left:159.00px;top:321.61px;font-size:10.5px;color:#2569cf;letter-spacing:-0.320px;-webkit-text-stroke:0.45px currentColor;">AD angl 1 _ Employee engageme...</div>
<div class="t" style="left:327.00px;top:322.01px;font-size:10.5px;color:#72777c;letter-spacing:-0.100px;-webkit-text-stroke:0.25px currentColor;">Off</div>
<div class="a" style="left:400.5px;top:327px;width:8.5px;height:1.5px;background:#68717a"></div>
<svg style="left:503.70px;top:326.00px;color:#1c2b33" width="13" height="7"><use href="#egp"/></svg>
<div class="t" style="left:472.18px;top:322.01px;font-size:10.5px;color:#1c2b33;letter-spacing:-0.150px;-webkit-text-stroke:0.25px currentColor;">190.41</div>
<svg style="left:598.70px;top:326.00px;color:#1c2b33" width="13" height="7"><use href="#egp"/></svg>
<div class="t" style="left:572.87px;top:322.01px;font-size:10.5px;color:#1c2b33;letter-spacing:-0.150px;-webkit-text-stroke:0.25px currentColor;">50.00</div>
<div class="t" style="left:682.17px;top:322.01px;font-size:10.5px;color:#1c2b33;letter-spacing:-0.150px;-webkit-text-stroke:0.25px currentColor;">7,684</div>
<svg style="left:789.70px;top:326.00px;color:#1c2b33" width="13" height="7"><use href="#egp"/></svg>
<div class="t" style="left:763.87px;top:322.01px;font-size:10.5px;color:#1c2b33;letter-spacing:-0.150px;-webkit-text-stroke:0.25px currentColor;">24.78</div>
<div class="t" style="left:838.17px;top:322.01px;font-size:10.5px;color:#1c2b33;letter-spacing:-0.150px;-webkit-text-stroke:0.25px currentColor;">6,080</div>
<div class="t" style="left:928.86px;top:322.01px;font-size:10.5px;color:#1c2b33;letter-spacing:-0.150px;-webkit-text-stroke:0.25px currentColor;">1.26</div>
<div class="t" style="left:985.99px;top:322.01px;font-size:10.5px;color:#1c2b33;letter-spacing:-0.150px;-webkit-text-stroke:0.25px currentColor;">15.10%</div>
<div class="t" style="left:1075.17px;top:322.01px;font-size:10.5px;color:#1c2b33;letter-spacing:-0.150px;-webkit-text-stroke:0.25px currentColor;">1,058</div>
<svg style="left:1183.70px;top:326.00px;color:#1c2b33" width="13" height="7"><use href="#egp"/></svg>
<div class="t" style="left:1163.56px;top:322.01px;font-size:10.5px;color:#1c2b33;letter-spacing:-0.150px;-webkit-text-stroke:0.25px currentColor;">0.16</div>
<div class="a" style="left:1252.9px;top:327px;width:8.5px;height:1.5px;background:#68717a"></div>
<div class="t" style="left:593.20px;top:336.38px;font-size:9px;color:#8a939b;letter-spacing:-0.100px;-webkit-text-stroke:0.1px currentColor;">Daily</div>
<div class="t" style="left:1275.00px;top:322.01px;font-size:10.5px;color:#1c2b33;letter-spacing:-0.100px;-webkit-text-stroke:0.25px currentColor;">7...</div>
<div class="t" style="left:1373.13px;top:322.01px;font-size:10.5px;color:#1c2b33;letter-spacing:-0.150px;-webkit-text-stroke:0.25px currentColor;">593</div>
<div class="a" style="left:1373.13px;top:332.50px;width:17.07px;height:1px;background:repeating-linear-gradient(90deg,#7a848d 0 1px,transparent 1px 2px)"></div>
<div class="t" style="left:1345.77px;top:336.38px;font-size:9px;color:#8a939b;letter-spacing:-0.100px;-webkit-text-stroke:0.1px currentColor;">valuo viduo</div>
<svg style="left:1474.50px;top:326.00px;color:#1c2b33" width="13" height="7"><use href="#egp"/></svg>
<div class="t" style="left:1454.36px;top:322.01px;font-size:10.5px;color:#1c2b33;letter-spacing:-0.150px;-webkit-text-stroke:0.25px currentColor;">0.32</div>
<div class="a" style="left:1454.36px;top:332.50px;width:33.14px;height:1px;background:repeating-linear-gradient(90deg,#7a848d 0 1px,transparent 1px 2px)"></div>
<div class="t" style="left:1427.26px;top:336.38px;font-size:9px;color:#8a939b;letter-spacing:-0.100px;-webkit-text-stroke:0.1px currentColor;">Per valuo viduo</div>
<div class="t" style="left:161.50px;top:356.81px;font-size:10.5px;color:#1c2b33;letter-spacing:-0.150px;-webkit-text-stroke:0.25px currentColor;">Results from 4 ad sets</div>
<svg style="left:266.15654296875px;top:357.8px" width="8.5" height="8.5" viewBox="0 0 8.5 8.5"><circle cx="4.25" cy="4.25" r="4.25" fill="#1c2b33"/><rect x="3.6" y="3.5" width="1.3" height="3.4" fill="#fff"/><circle cx="4.25" cy="2.1" r=".75" fill="#fff"/></svg>
<svg style="left:505.20px;top:360.80px;color:#1c2b33" width="13" height="7"><use href="#egp"/></svg>
<div class="t" style="left:473.68px;top:356.81px;font-size:10.5px;color:#1c2b33;letter-spacing:-0.150px;-webkit-text-stroke:0.32px currentColor;">609.75</div>
<div class="t" style="left:474.27px;top:371.58px;font-size:9px;color:#8a939b;letter-spacing:-0.100px;-webkit-text-stroke:0.1px currentColor;">Total Spent</div>
<div class="t" style="left:677.98px;top:356.81px;font-size:10.5px;color:#1c2b33;letter-spacing:-0.150px;-webkit-text-stroke:0.32px currentColor;">26,216</div>
<div class="t" style="left:690.69px;top:371.58px;font-size:9px;color:#8a939b;letter-spacing:-0.100px;-webkit-text-stroke:0.1px currentColor;">Total</div>
<svg style="left:791.20px;top:360.80px;color:#1c2b33" width="13" height="7"><use href="#egp"/></svg>
<div class="t" style="left:765.37px;top:356.81px;font-size:10.5px;color:#1c2b33;letter-spacing:-0.150px;-webkit-text-stroke:0.32px currentColor;">23.26</div>
<div class="t" style="left:723.27px;top:371.58px;font-size:9px;color:#8a939b;letter-spacing:-0.100px;-webkit-text-stroke:0.1px currentColor;">Per 1,000 Impressi...</div>
<div class="t" style="left:833.98px;top:356.81px;font-size:10.5px;color:#1c2b33;letter-spacing:-0.150px;-webkit-text-stroke:0.32px currentColor;">18,296</div>
<div class="a" style="left:833.98px;top:367.30px;width:31.22px;height:1px;background:repeating-linear-gradient(90deg,#7a848d 0 1px,transparent 1px 2px)"></div>
<div class="t" style="left:819.38px;top:371.58px;font-size:9px;color:#8a939b;letter-spacing:-0.100px;-webkit-text-stroke:0.1px currentColor;">Accounts ...</div>
<div class="t" style="left:930.36px;top:356.81px;font-size:10.5px;color:#1c2b33;letter-spacing:-0.150px;-webkit-text-stroke:0.32px currentColor;">1.43</div>
<div class="t" style="left:877.46px;top:371.58px;font-size:9px;color:#8a939b;letter-spacing:-0.100px;-webkit-text-stroke:0.1px currentColor;">Per Accounts Ce...</div>
<div class="t" style="left:987.49px;top:356.81px;font-size:10.5px;color:#1c2b33;letter-spacing:-0.150px;-webkit-text-stroke:0.32px currentColor;">14.35%</div>
<div class="t" style="left:960.78px;top:371.58px;font-size:9px;color:#8a939b;letter-spacing:-0.100px;-webkit-text-stroke:0.1px currentColor;">Per Impressio...</div>
<div class="t" style="left:1076.67px;top:356.81px;font-size:10.5px;color:#1c2b33;letter-spacing:-0.150px;-webkit-text-stroke:0.32px currentColor;">3,061</div>
<div class="t" style="left:1083.69px;top:371.58px;font-size:9px;color:#8a939b;letter-spacing:-0.100px;-webkit-text-stroke:0.1px currentColor;">Total</div>
<svg style="left:1185.20px;top:360.80px;color:#1c2b33" width="13" height="7"><use href="#egp"/></svg>
<div class="t" style="left:1165.06px;top:356.81px;font-size:10.5px;color:#1c2b33;letter-spacing:-0.150px;-webkit-text-stroke:0.32px currentColor;">0.16</div>
<div class="t" style="left:1163.10px;top:371.58px;font-size:9px;color:#8a939b;letter-spacing:-0.100px;-webkit-text-stroke:0.1px currentColor;">Per Click</div>
<div class="a" style="left:1254.4px;top:362px;width:8.5px;height:1.5px;background:#68717a"></div>
<div class="t" style="left:1230.54px;top:371.58px;font-size:9px;color:#8a939b;letter-spacing:-0.100px;-webkit-text-stroke:0.1px currentColor;">Average</div>
<div class="t" style="left:1275.00px;top:356.81px;font-size:10.5px;color:#1c2b33;letter-spacing:-0.100px;-webkit-text-stroke:0.32px currentColor;">7...</div>
<div class="t" style="left:1366.07px;top:356.81px;font-size:10.5px;color:#1c2b33;letter-spacing:-0.150px;-webkit-text-stroke:0.32px currentColor;">1,883</div>
<div class="a" style="left:1366.07px;top:367.30px;width:25.53px;height:1px;background:repeating-linear-gradient(90deg,#7a848d 0 1px,transparent 1px 2px)"></div>
<div class="t" style="left:1347.17px;top:371.58px;font-size:9px;color:#8a939b;letter-spacing:-0.100px;-webkit-text-stroke:0.1px currentColor;">valuo viduo</div>
<svg style="left:1475.30px;top:360.80px;color:#1c2b33" width="13" height="7"><use href="#egp"/></svg>
<div class="t" style="left:1455.16px;top:356.81px;font-size:10.5px;color:#1c2b33;letter-spacing:-0.150px;-webkit-text-stroke:0.32px currentColor;">0.32</div>
<div class="a" style="left:1455.16px;top:367.30px;width:33.14px;height:1px;background:repeating-linear-gradient(90deg,#7a848d 0 1px,transparent 1px 2px)"></div>
<div class="t" style="left:1427.76px;top:371.58px;font-size:9px;color:#8a939b;letter-spacing:-0.100px;-webkit-text-stroke:0.1px currentColor;">Per valuo viduo</div>
<div class="a" style="left:54px;top:406px;width:1401.5px;height:5px;background:#c2c2c2;border-radius:3px"></div>
<div class="a" style="left:1489px;top:148px;width:6px;height:467px;background:linear-gradient(90deg,#f4f6f9,#e6edf5)"></div>
<div class="a" style="left:447.6px;top:346.3px;width:87.19999999999993px;height:48.599999999999966px;border:1px solid rgba(255,255,255,.8)"></div>
<div class="a" style="left:448.6px;top:347.3px;width:85.19999999999993px;height:46.599999999999966px;border:4.7px solid #b51a0c"></div>
<div class="a" style="left:955.8px;top:346.4px;width:78.20000000000005px;height:48.400000000000034px;border:1px solid rgba(255,255,255,.8)"></div>
<div class="a" style="left:956.8px;top:347.4px;width:76.20000000000005px;height:46.400000000000034px;border:4.7px solid #b51a0c"></div>
<div class="a" style="left:1042px;top:346.4px;width:78px;height:48.400000000000034px;border:1px solid rgba(255,255,255,.8)"></div>
<div class="a" style="left:1043px;top:347.4px;width:76px;height:46.400000000000034px;border:4.7px solid #b51a0c"></div>
<div class="a" style="left:1410px;top:346.8px;width:87px;height:48.19999999999999px;border:1px solid rgba(255,255,255,.8)"></div>
<div class="a" style="left:1411px;top:347.8px;width:85px;height:46.19999999999999px;border:4.7px solid #b51a0c"></div>
<div class="a" style="left:0px;top:0px;width:1500px;height:3px;background:#000"></div>
<div class="a" style="left:0px;top:0px;width:5.3px;height:615px;background:#000"></div>
<div class="a" style="left:1495px;top:0px;width:5px;height:615px;background:#000"></div>
<div class="a" style="left:0px;top:613.6px;width:1500px;height:1.3999999999999773px;background:#5e5e5e"></div>
<div class="a" style="left:1.7000000000000002px;top:-1.7000000000000002px;width:7.999999999999999px;height:8.0px;background:#fff;border:1px solid #333"></div>
<div class="a" style="left:746.8px;top:-1.5px;width:8.0px;height:8.0px;background:#fff;border:1px solid #333"></div>
<div class="a" style="left:1491.3px;top:-1.7000000000000002px;width:8.0px;height:8.0px;background:#fff;border:1px solid #333"></div>
<div class="a" style="left:1.9000000000000004px;top:304.5px;width:8.0px;height:8.0px;background:#fff;border:1px solid #333"></div>
<div class="a" style="left:1491.4px;top:304.8px;width:8.0px;height:8.0px;background:#fff;border:1px solid #333"></div>
<div class="a" style="left:1.7000000000000002px;top:610px;width:7.999999999999999px;height:8px;background:#fff;border:1px solid #333"></div>
<div class="a" style="left:746.7px;top:610px;width:8.0px;height:8px;background:#fff;border:1px solid #333"></div>
<div class="a" style="left:1491.3px;top:610px;width:8.0px;height:8px;background:#fff;border:1px solid #333"></div>
</body></html>
